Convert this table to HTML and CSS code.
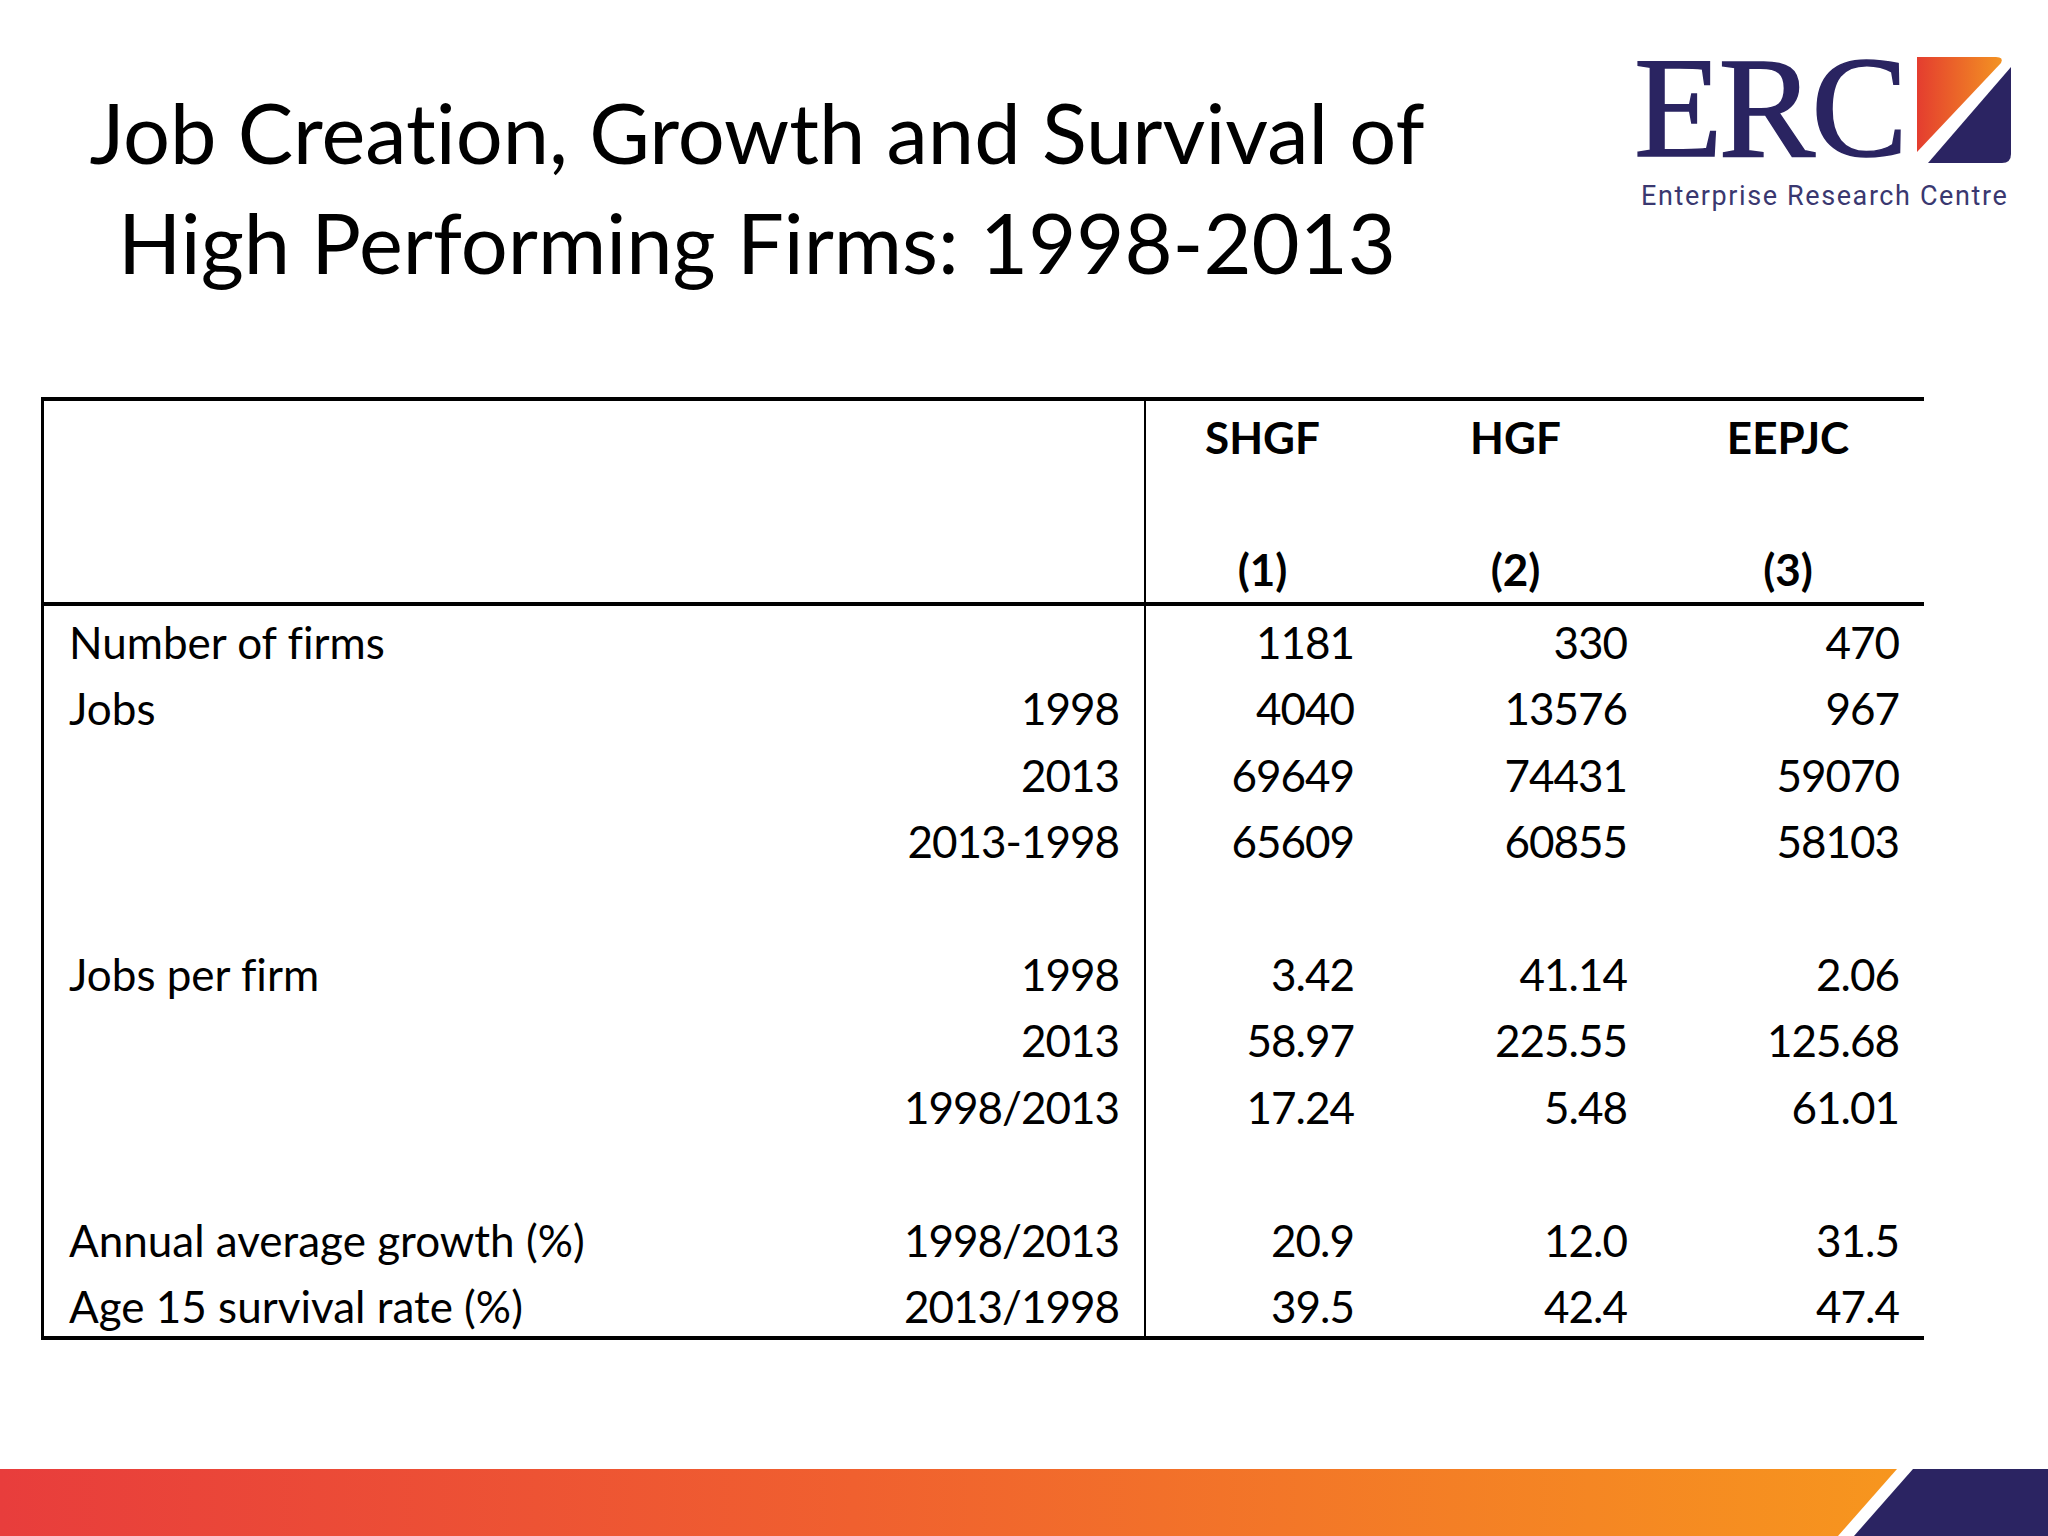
FILE: index.html
```html
<!DOCTYPE html>
<html lang="en">
<head>
<meta charset="utf-8">
<title>Job Creation, Growth and Survival of High Performing Firms: 1998-2013</title>
<link rel="stylesheet" href="styles.css">
</head>
<body>
<div class="slide">
  <header class="top">
    <h1 class="title">Job Creation, Growth and Survival of<br>High Performing Firms: 1998-2013</h1>
    <div class="logo">
      <div class="logo-row">
        <span class="erc">ERC</span>
        <svg class="mark" width="96" height="108" viewBox="0 0 96 108" aria-hidden="true">
          <defs>
            <linearGradient id="lg-mark" x1="0" y1="0" x2="1" y2="0">
              <stop offset="0" stop-color="#e43d2f"/>
              <stop offset="1" stop-color="#f39322"/>
            </linearGradient>
          </defs>
          <path d="M1 1 H80 Q88 1 85 7 L1 96 Z" fill="url(#lg-mark)"/>
          <path d="M95 11 V98 Q95 107 86 107 H12 Z" fill="#2b2462"/>
        </svg>
      </div>
      <div class="erc-sub">Enterprise Research Centre</div>
    </div>
  </header>

  <table class="data">
    <colgroup>
      <col class="c-label"><col class="c-year"><col class="c-n1"><col class="c-n2"><col class="c-n3">
    </colgroup>
    <thead>
      <tr>
        <th colspan="2"></th>
        <th class="first">SHGF<br><br>(1)</th>
        <th>HGF<br><br>(2)</th>
        <th>EEPJC<br><br>(3)</th>
      </tr>
    </thead>
    <tbody>
      <tr><td>Number of firms</td><td class="yr"></td><td class="v first">1181</td><td class="v">330</td><td class="v">470</td></tr>
      <tr><td>Jobs</td><td class="yr">1998</td><td class="v first">4040</td><td class="v">13576</td><td class="v">967</td></tr>
      <tr><td></td><td class="yr">2013</td><td class="v first">69649</td><td class="v">74431</td><td class="v">59070</td></tr>
      <tr><td></td><td class="yr">2013-1998</td><td class="v first">65609</td><td class="v">60855</td><td class="v">58103</td></tr>
      <tr class="gap"><td>&nbsp;</td><td></td><td class="first"></td><td></td><td></td></tr>
      <tr><td>Jobs per firm</td><td class="yr">1998</td><td class="v first">3.42</td><td class="v">41.14</td><td class="v">2.06</td></tr>
      <tr><td></td><td class="yr">2013</td><td class="v first">58.97</td><td class="v">225.55</td><td class="v">125.68</td></tr>
      <tr><td></td><td class="yr">1998/2013</td><td class="v first">17.24</td><td class="v">5.48</td><td class="v">61.01</td></tr>
      <tr class="gap"><td>&nbsp;</td><td></td><td class="first"></td><td></td><td></td></tr>
      <tr><td>Annual average growth (%)</td><td class="yr">1998/2013</td><td class="v first">20.9</td><td class="v">12.0</td><td class="v">31.5</td></tr>
      <tr><td>Age 15 survival rate (%)</td><td class="yr">2013/1998</td><td class="v first">39.5</td><td class="v">42.4</td><td class="v">47.4</td></tr>
    </tbody>
  </table>

  <footer class="bar">
    <svg width="2048" height="67" viewBox="0 0 2048 67" aria-hidden="true">
      <defs>
        <linearGradient id="lg-bar" x1="0" y1="0" x2="1" y2="0">
          <stop offset="0" stop-color="#e83d3c"/>
          <stop offset="0.45" stop-color="#f0602f"/>
          <stop offset="1" stop-color="#f7961e"/>
        </linearGradient>
      </defs>
      <polygon points="0,0 1897,0 1838,67 0,67" fill="url(#lg-bar)"/>
      <polygon points="1913,0 2048,0 2048,67 1854,67" fill="#2b2462"/>
    </svg>
  </footer>
</div>
</body>
</html>
```

FILE: styles.css
```css
html, body {
  margin: 0;
  padding: 0;
  background: #ffffff;
}

.slide {
  width: 2048px;
  height: 1536px;
  display: flex;
  flex-direction: column;
  background: #ffffff;
  color: #000000;
  font-family: Lato, "Open Sans", sans-serif;
  font-variant-ligatures: none;
  overflow: hidden;
}

.top {
  display: flex;
  align-items: flex-start;
  height: 397px;
  flex: none;
}

.title {
  width: 1514px;
  margin: 0;
  padding-top: 77px;
  text-align: center;
  font-family: Lato, "Open Sans", sans-serif;
  font-weight: 400;
  font-size: 83px;
  line-height: 110px;
  color: #000;
}

.logo {
  margin-left: 120px;
  padding-top: 35px;
  display: flex;
  flex-direction: column;
}

.logo-row {
  display: flex;
  align-items: flex-start;
}

.erc {
  font-family: "Liberation Serif", "Times New Roman", serif;
  font-size: 145px;
  line-height: 145px;
  letter-spacing: -4px;
  color: #2a2461;
  -webkit-text-stroke: 1.5px #2a2461;
}

.mark {
  margin-top: 21px;
  margin-left: 12px;
  flex: none;
}

.erc-sub {
  margin-top: 0;
  padding-left: 7px;
  font-family: Roboto, "DejaVu Sans", sans-serif;
  font-size: 27px;
  line-height: 32px;
  letter-spacing: 1.6px;
  color: #3a3870;
  white-space: nowrap;
}

.data {
  flex: none;
  margin-left: 41px;
  width: 1883px;
  table-layout: fixed;
  border-collapse: separate;
  border-spacing: 0;
  border-top: 4px solid #000;
  border-bottom: 4px solid #000;
  border-left: 3px solid #000;
  font-family: Lato, "Open Sans", sans-serif;
  font-size: 44px;
  color: #000;
}

.c-label { width: 800px; }
.c-year { width: 300px; }
.c-n1 { width: 235px; }
.c-n2 { width: 273px; }
.c-n3 { width: 272px; }

.data th {
  padding: 3px 0 0;
  line-height: 66px;
  font-weight: 700;
  text-align: center;
  vertical-align: top;
  border-bottom: 4px solid #000;
  white-space: nowrap;
}

.data td {
  padding: 6px 25px 0;
  line-height: 60.4px;
  text-align: left;
  vertical-align: top;
  white-space: nowrap;
}

.data td.yr,
.data td.v {
  text-align: right;
  letter-spacing: -1px;
}

.data .first {
  border-left: 2px solid #000;
}

.bar {
  margin-top: auto;
  height: 67px;
  flex: none;
  line-height: 0;
}

.bar svg {
  display: block;
}
```
